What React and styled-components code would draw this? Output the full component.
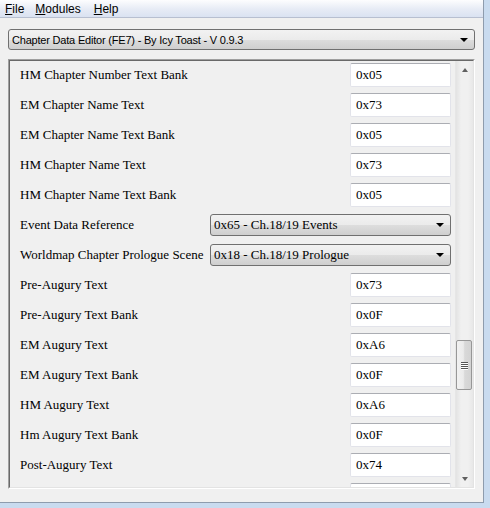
import React from 'react';
import styled, { createGlobalStyle } from 'styled-components';

const GlobalStyle = createGlobalStyle`
  html, body {
    margin: 0;
    padding: 0;
    background: #c9dbef;
  }
  body {
    width: 490px;
    height: 508px;
    overflow: hidden;
  }
`;

const Window = styled.div`
  width: 484px;
  height: 503px;
  box-sizing: border-box;
  background: #f0f0f0;
  border-right: 1px solid #8e9cad;
  border-bottom: 1px solid #8e9cad;
  display: flex;
  flex-direction: column;
  font-family: 'Liberation Sans', Arial, sans-serif;
`;

const MenuBar = styled.div`
  height: 18px;
  box-sizing: border-box;
  display: flex;
  align-items: center;
  padding-left: 5px;
  background: linear-gradient(#fdfdfe, #e6ebf5 55%, #dae2f1);
  border-bottom: 1px solid #b7bfd0;
  font-size: 12px;
  color: #000;
`;

const MenuItem = styled.span`
  margin-right: ${p => p.gap}px;
  line-height: 16px;
`;

const TopArea = styled.div`
  padding: 11px 8px 0 8px;
  display: flex;
  flex-direction: column;
  gap: 9px;
`;

const Combo = styled.div`
  height: ${p => p.h}px;
  width: ${p => p.w}px;
  flex-shrink: 0;
  box-sizing: border-box;
  margin-right: ${p => p.mr || 0}px;
  border: 1px solid #707070;
  border-radius: 3px;
  background: linear-gradient(#f2f2f2, #ebebeb 50%, #dddddd 51%, #cfcfcf);
  display: flex;
  align-items: center;
  padding-left: ${p => p.pad}px;
  padding-right: 6px;
  font-family: ${p => (p.serif ? "'Liberation Serif', 'Times New Roman', serif" : "'Liberation Sans', Arial, sans-serif")};
  font-size: ${p => (p.serif ? 13 : 11)}px;
  color: #000;
  white-space: nowrap;
  overflow: hidden;
`;

const ComboText = styled.span`
  flex: 1;
  letter-spacing: ${p => p.ls || 0}px;
`;

const Arrow = styled.span`
  width: 0;
  height: 0;
  border-left: 4px solid transparent;
  border-right: 4px solid transparent;
  border-top: 4px solid #000;
`;

const Panel = styled.div`
  width: 467px;
  height: 430px;
  box-sizing: border-box;
  border-top: 1px solid #a0a0a0;
  border-left: 1px solid #a0a0a0;
  border-right: 1px solid #ffffff;
  border-bottom: 1px solid #ffffff;
  display: flex;
`;

const PanelInner = styled.div`
  flex: 1;
  display: flex;
  border-top: 1px solid #696969;
  border-left: 1px solid #696969;
  border-right: 1px solid #e3e3e3;
  border-bottom: 1px solid #e3e3e3;
  overflow: hidden;
`;

const Rows = styled.div`
  flex: 1;
  padding-left: 10px;
  overflow: hidden;
  display: flex;
  flex-direction: column;
  margin-top: -1px;
`;

const Row = styled.div`
  height: 30px;
  flex-shrink: 0;
  display: flex;
  align-items: center;
  font-family: 'Liberation Serif', 'Times New Roman', serif;
  font-size: 13px;
  color: #000;
`;

const Label = styled.span`
  flex: 1;
  white-space: nowrap;
`;

const TextBox = styled.div`
  width: 101px;
  height: 24px;
  box-sizing: border-box;
  margin-right: 4px;
  background: #fff;
  border: 1px solid #e2e3ea;
  border-top-color: #abadb3;
  border-radius: 2px;
  padding-left: 5px;
  display: flex;
  align-items: center;
  padding-bottom: 1px;
`;

const ScrollBar = styled.div`
  width: 17px;
  display: flex;
  flex-direction: column;
  background: linear-gradient(90deg, #e3e3e3, #f0f0f0 30%, #f0f0f0 70%, #e8e8e8);
  border-left: 1px solid #e6e6e6;
`;

const ScrollBtn = styled.div`
  height: 17px;
  display: flex;
  align-items: center;
  justify-content: center;
  flex-shrink: 0;
`;

const Tri = styled.span`
  width: 0;
  height: 0;
  border-left: 3px solid transparent;
  border-right: 3px solid transparent;
  ${p => (p.up ? 'border-bottom: 4px solid #606060;' : 'border-top: 4px solid #606060;')}
`;

const Track = styled.div`
  flex: 1;
  position: relative;
`;

const Thumb = styled.div`
  position: absolute;
  left: 0;
  right: 1px;
  top: ${p => p.top}px;
  height: ${p => p.h}px;
  box-sizing: border-box;
  border: 1px solid #979797;
  border-radius: 2px;
  background: linear-gradient(90deg, #f1f1f1, #ebebeb 45%, #d9d9d9 55%, #d3d3d3);
  display: flex;
  flex-direction: column;
  align-items: center;
  justify-content: center;
  gap: 1px;
`;

const Grip = styled.span`
  width: 7px;
  height: 1px;
  background: #555;
  box-shadow: 0 1px 0 #fff;
`;

const rows = [
  { label: 'HM Chapter Number Text Bank', value: '0x05' },
  { label: 'EM Chapter Name Text', value: '0x73' },
  { label: 'EM Chapter Name Text Bank', value: '0x05' },
  { label: 'HM Chapter Name Text', value: '0x73' },
  { label: 'HM Chapter Name Text Bank', value: '0x05' },
  { label: 'Event Data Reference', combo: '0x65 - Ch.18/19 Events' },
  { label: 'Worldmap Chapter Prologue Scene', combo: '0x18 - Ch.18/19 Prologue' },
  { label: 'Pre-Augury Text', value: '0x73' },
  { label: 'Pre-Augury Text Bank', value: '0x0F' },
  { label: 'EM Augury Text', value: '0xA6' },
  { label: 'EM Augury Text Bank', value: '0x0F' },
  { label: 'HM Augury Text', value: '0xA6' },
  { label: 'Hm Augury Text Bank', value: '0x0F' },
  { label: 'Post-Augury Text', value: '0x74' },
  { label: '', value: '' },
];

const App = () => (
  <>
    <GlobalStyle />
    <Window>
      <MenuBar>
        <MenuItem gap={11}><u>F</u>ile</MenuItem>
        <MenuItem gap={13}><u>M</u>odules</MenuItem>
        <MenuItem gap={0}><u>H</u>elp</MenuItem>
      </MenuBar>
      <TopArea>
        <Combo w={467} h={21} pad={3}>
          <ComboText ls={-0.2}>Chapter Data Editor (FE7) - By Icy Toast - V 0.9.3</ComboText>
          <Arrow />
        </Combo>
        <Panel>
          <PanelInner>
            <Rows>
              {rows.map((r, i) => (
                <Row key={i}>
                  <Label>{r.label}</Label>
                  {r.combo ? (
                    <Combo serif w={241} h={22} pad={3} mr={4}>
                      <ComboText>{r.combo}</ComboText>
                      <Arrow />
                    </Combo>
                  ) : (
                    <TextBox>{r.value}</TextBox>
                  )}
                </Row>
              ))}
            </Rows>
            <ScrollBar>
              <ScrollBtn><Tri up /></ScrollBtn>
              <Track>
                <Thumb top={262} h={50}>
                  <Grip />
                  <Grip />
                  <Grip />
                  <Grip />
                </Thumb>
              </Track>
              <ScrollBtn><Tri /></ScrollBtn>
            </ScrollBar>
          </PanelInner>
        </Panel>
      </TopArea>
    </Window>
  </>
);

export default App;
